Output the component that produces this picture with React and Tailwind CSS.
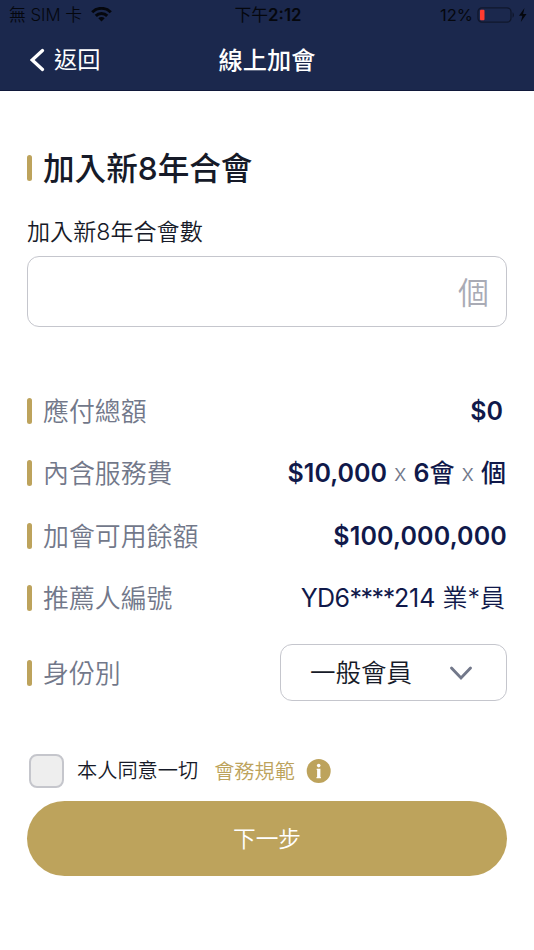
import React, { useState } from "react";

const filas = [
  { id: "total", label: "應付總額", valor: <span className="mr-[4px] text-[25px] font-semibold">$0</span> },
  {
    id: "servicio",
    label: "內含服務費",
    valor: (
      <span className="mr-[1px] flex text-[25px] font-semibold">
        $10,000
        <span className="mx-[7px] text-[23.5px] font-[350] text-[#72788a]">x</span>
        6<span className="font-medium">會</span>
        <span className="mx-[7px] text-[23.5px] font-[350] text-[#72788a]">x</span>
        <span className="font-medium">個</span>
      </span>
    ),
  },
  { id: "saldo", label: "加會可用餘額", valor: <span className="text-[25px] font-semibold tracking-[0.15px]">$100,000,000</span> },
  {
    id: "referido",
    label: "推薦人編號",
    valor: (
      <span className="mr-[2px] text-[25px] font-[350]">
        <span className="font-normal">
          <span className="tracking-[-0.6px]">YD6</span>
          <span className="tracking-[-1.4px]">****</span>214
        </span>{" "}
        業*員
      </span>
    ),
  },
];

export default function App() {
  const [acepta, setAcepta] = useState(false);

  return (
    <div className="h-[950px] w-[534px] overflow-hidden bg-white font-['Inter','Noto_Sans_CJK_TC',sans-serif] text-[#161a28]">
      <header className="h-[91px] border-b border-[#10183a] bg-[#1b284d]">
        <StatusBar />
        <div className="grid h-[60px] grid-cols-[1fr_auto_1fr] items-center text-white">
          <button className="flex items-center pl-[30px] text-[23.2px] leading-none">
            <svg width="15" height="24" viewBox="0 0 15 24" fill="none" stroke="currentColor" strokeWidth="3.2" strokeLinecap="round">
              <path d="M12.5 2.5 2.2 12l10.3 9.5" />
            </svg>
            <span className="ml-[9px] pt-[2px]">返回</span>
          </button>
          <h1 className="pt-[2px] text-[24.2px] font-medium leading-none">線上加會</h1>
        </div>
      </header>

      <main className="px-[27px]">
        <div className="mt-[60px] flex h-[34px] items-center">
          <Marca />
          <h2 className="ml-[11.5px] whitespace-nowrap pt-[2px] text-[31.6px] font-medium leading-none">加入新8年合會</h2>
        </div>

        <label className="mt-[34px] flex h-[26px] items-center whitespace-nowrap pt-[2px] text-[23.1px] font-[350] leading-none">加入新8年合會數</label>
        <div className="mt-[11px] flex h-[71px] items-center justify-end rounded-[12px] border-[1.5px] border-[#c5c6cd] pr-[17px] pt-[2px] text-[31px] font-[350] leading-none text-[#a9abb5]">
          個
        </div>

        <div className="mt-[53px]">
          {filas.map((fila) => (
            <Fila key={fila.id} label={fila.label}>
              {fila.valor}
            </Fila>
          ))}
        </div>

        <div className="mt-[15px] flex h-[57px] items-center justify-between">
          <Etiqueta>身份別</Etiqueta>
          <button className="flex h-[57px] w-[227px] items-center justify-between rounded-[12px] border-[1.5px] border-[#c5c6cd] pl-[29px] pr-[33px] text-[25.5px] font-[350] leading-none">
            <span>一般會員</span>
            <svg width="24" height="16" viewBox="0 0 24 16" fill="none" stroke="#72788a" strokeWidth="2.9" strokeLinecap="round">
              <path d="m2.5 3 9.5 10 9.5-10" />
            </svg>
          </button>
        </div>

        <div className="mt-[53px] flex h-[34px] items-center text-[20.2px] leading-none">
          <button
            onClick={() => setAcepta(!acepta)}
            aria-label="本人同意一切"
            className={`ml-[2px] h-[34px] w-[35px] rounded-[8px] border-2 border-[#c5c6cc] ${acepta ? "bg-[#bda35c]" : "bg-[#eeeeee]"}`}
          />
          <span className="ml-[13px] font-[350]">本人同意一切</span>
          <span className="ml-[16px] pt-[2px] font-[350] text-[#bda35c]">會務規範</span>
          <svg className="ml-[11px]" width="25" height="25" viewBox="0 0 25 25">
            <circle cx="12.7" cy="12" r="12" fill="#bda35c" />
            <circle cx="12.7" cy="6.6" r="1.8" fill="white" />
            <path d="M10.7 9.8h3.7v8.1h.5v1.3h-4.4v-1.3h.6v-6.8h-.4z" fill="white" />
          </svg>
        </div>

        <button className="mt-[13px] flex h-[75px] w-full items-center justify-center rounded-full bg-[#bda35c] pt-[1px] text-[22.7px] font-[350] leading-none text-white">
          下一步
        </button>
      </main>
    </div>
  );
}

function StatusBar() {
  return (
    <div className="grid h-[30px] grid-cols-[1fr_auto_1fr] items-center leading-none text-[#05070d]">
      <div className="flex items-center pl-[9px]">
        <span className="whitespace-nowrap text-[16.8px] font-[350]">無 SIM 卡</span>
        <svg className="ml-[9px]" width="21" height="15" viewBox="0 0 21 15" fill="none" stroke="currentColor" strokeWidth="3">
          <path d="M1.2 5.2a13.2 13.2 0 0 1 18.6 0M4.8 8.9a8.1 8.1 0 0 1 11.4 0" />
          <path d="m10.5 14.5 3.2-3.3a4.6 4.6 0 0 0-6.4 0z" fill="currentColor" stroke="none" />
        </svg>
      </div>
      <span className="pl-[2px] text-[16.8px] font-semibold">
        <span className="font-normal">下午</span>2:12
      </span>
      <div className="flex items-center justify-end pr-[7px]">
        <span className="text-[16.5px] font-normal">12%</span>
        <svg className="ml-[4px]" width="50" height="16" viewBox="0 0 50 16">
          <rect x="1" y=".8" width="33" height="14.4" rx="4" fill="none" stroke="#10172c" strokeWidth="1.3" />
          <rect x="3" y="2.8" width="4.5" height="10.4" rx="1" fill="#ff3b30" />
          <path d="M35.5 5.3c2 1 2 4.5 0 5.5z" fill="#10172c" />
          <path d="M47.5 1 42 8.7h3.4L43.8 15 49.5 7h-3.4z" fill="currentColor" />
        </svg>
      </div>
    </div>
  );
}

function Fila({ label, children }) {
  return (
    <div className="flex h-[62.3px] items-center justify-between whitespace-nowrap leading-none text-[#10194a]">
      <Etiqueta>{label}</Etiqueta>
      <div className="pt-[1px]">{children}</div>
    </div>
  );
}

function Etiqueta({ children }) {
  return (
    <div className="flex items-center text-[25.9px] font-[350] leading-none text-[#72788a]">
      <Marca />
      <span className="ml-[11.5px] pt-[2px]">{children}</span>
    </div>
  );
}

function Marca() {
  return <span className="h-[26px] w-[4.5px] rounded-full bg-[#bda35c]" />;
}
